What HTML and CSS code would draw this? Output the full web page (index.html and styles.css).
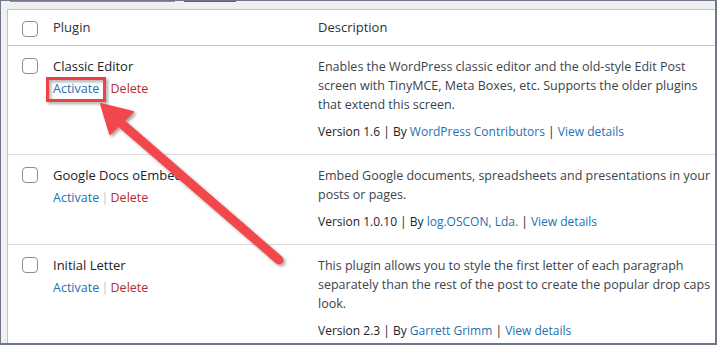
FILE: index.html
```html
<!DOCTYPE html>
<html lang="en">
<head>
    <meta charset="UTF-8">
    <meta name="viewport" content="width=device-width, initial-scale=1.0">
    <title>Plugins</title>
    <link rel="stylesheet" href="styles.css">
</head>
<body>
    <div class="screen">
        <div class="toolbar">
            <span class="field-edge"></span>
            <span class="button-edge"></span>
        </div>

        <table class="plugins">
            <thead>
                <tr>
                    <th class="check-column"><input type="checkbox" class="cb"></th>
                    <th class="name-column">Plugin</th>
                    <th class="desc-column">Description</th>
                </tr>
            </thead>
            <tbody>
                <tr>
                    <td class="check-column"><input type="checkbox" class="cb"></td>
                    <td class="plugin-title">
                        <strong>Classic Editor</strong>
                        <div class="row-actions"><a href="#" class="activate">Activate</a> | <a href="#" class="delete">Delete</a></div>
                    </td>
                    <td class="plugin-desc">
                        <p>Enables the WordPress classic editor and the old-style Edit Post<br>screen with TinyMCE, Meta Boxes, etc. Supports the older plugins<br>that extend this screen.</p>
                        <div class="version">Version 1.6 | By <a href="#">WordPress Contributors</a> | <a href="#">View details</a></div>
                    </td>
                </tr>
                <tr>
                    <td class="check-column"><input type="checkbox" class="cb"></td>
                    <td class="plugin-title">
                        <strong>Google Docs oEmbed</strong>
                        <div class="row-actions"><a href="#" class="activate">Activate</a> | <a href="#" class="delete">Delete</a></div>
                    </td>
                    <td class="plugin-desc">
                        <p>Embed Google documents, spreadsheets and presentations in your<br>posts or pages.</p>
                        <div class="version">Version 1.0.10 | By <a href="#">log.OSCON, Lda.</a> | <a href="#">View details</a></div>
                    </td>
                </tr>
                <tr>
                    <td class="check-column"><input type="checkbox" class="cb"></td>
                    <td class="plugin-title">
                        <strong>Initial Letter</strong>
                        <div class="row-actions"><a href="#" class="activate">Activate</a> | <a href="#" class="delete">Delete</a></div>
                    </td>
                    <td class="plugin-desc">
                        <p>This plugin allows you to style the first letter of each paragraph<br>separately than the rest of the post to create the popular drop caps<br>look.</p>
                        <div class="version">Version 2.3 | By <a href="#">Garrett Grimm</a> | <a href="#">View details</a></div>
                    </td>
                </tr>
            </tbody>
        </table>
    </div>

    <!-- screenshot annotation -->
    <svg class="callout" width="717" height="345" viewBox="0 0 717 345">
        <defs>
            <filter id="shadow" x="-20%" y="-20%" width="140%" height="140%">
                <feDropShadow dx="2" dy="2" stdDeviation="1.5" flood-color="#000" flood-opacity="0.35"/>
            </filter>
        </defs>
        <g filter="url(#shadow)">
            <rect x="47.5" y="78.5" width="57" height="22" fill="none" stroke="#ef3f46" stroke-width="3"/>
            <line x1="122" y1="124" x2="279" y2="260" stroke="#f2464c" stroke-width="9" stroke-linecap="round"/>
            <polygon points="101,104 110,134 133,112" fill="#f2464c" stroke="#f2464c" stroke-width="2" stroke-linejoin="round"/>
        </g>
    </svg>
</body>
</html>
```

FILE: styles.css
```css
body {
    margin: 0;
    position: relative;
    width: 717px;
    height: 345px;
    font-family: "Open Sans", "Liberation Sans", sans-serif;
    font-size: 13px;
    line-height: 19px;
    color: #2c3338;
}
.screen {
    box-sizing: border-box;
    width: 717px;
    height: 345px;
    padding-left: 6px;
    background: #f0f0f1;
    border: solid #6e7889;
    border-width: 1px 2px 2px 1px;
    overflow: hidden;
}
.toolbar {
    display: flex;
    height: 1px;
    margin-bottom: 7px;
}
.field-edge {
    width: 165px;
    margin-left: 3px;
    background: #8c8f94;
}
.button-edge {
    width: 52px;
    margin-left: 9px;
    background: #2271b1;
}
.plugins {
    width: 740px;
    table-layout: fixed;
    border-spacing: 0;
    background: #fff;
    border: 1px solid #c3c4c7;
}
.plugins th,
.plugins td {
    box-sizing: border-box;
    vertical-align: top;
    text-align: left;
}
.plugins th {
    font-weight: normal;
    padding: 8px 10px;
    border-bottom: 1px solid #c3c4c7;
    color: #2c3338;
}
.plugins th.check-column {
    width: 35px;
    padding: 11px 0 0 14px;
}
.plugins th.name-column {
    width: 265px;
}
.plugins td {
    padding: 11px 10px 13px;
    border-bottom: 1px solid #dcdcde;
}
.plugins tbody tr:last-child td {
    border-bottom: none;
}
.plugins td.check-column {
    padding: 12px 0 0 14px;
}
.cb {
    appearance: none;
    -webkit-appearance: none;
    display: block;
    box-sizing: border-box;
    width: 16px;
    height: 16px;
    margin: 0;
    border: 1px solid #8c8f94;
    border-radius: 4px;
    background: #fff;
}
.plugin-title strong {
    display: block;
    font-weight: normal;
    color: #1d2327;
}
.row-actions {
    padding-top: 3px;
    font-size: 12.5px;
    word-spacing: -1px;
    color: #c3c4c7;
}
a {
    text-decoration: none;
    color: #2271b1;
}
.row-actions .delete {
    color: #b32d2e;
}
.plugin-desc {
    white-space: nowrap;
    font-size: 12.5px;
}
.plugin-desc p {
    margin: 0;
    color: #3c434a;
}
.version {
    margin-top: 8px;
    font-size: 12px;
    color: #1d2327;
}
.callout {
    position: absolute;
    top: 0;
    left: 0;
    pointer-events: none;
}
```
